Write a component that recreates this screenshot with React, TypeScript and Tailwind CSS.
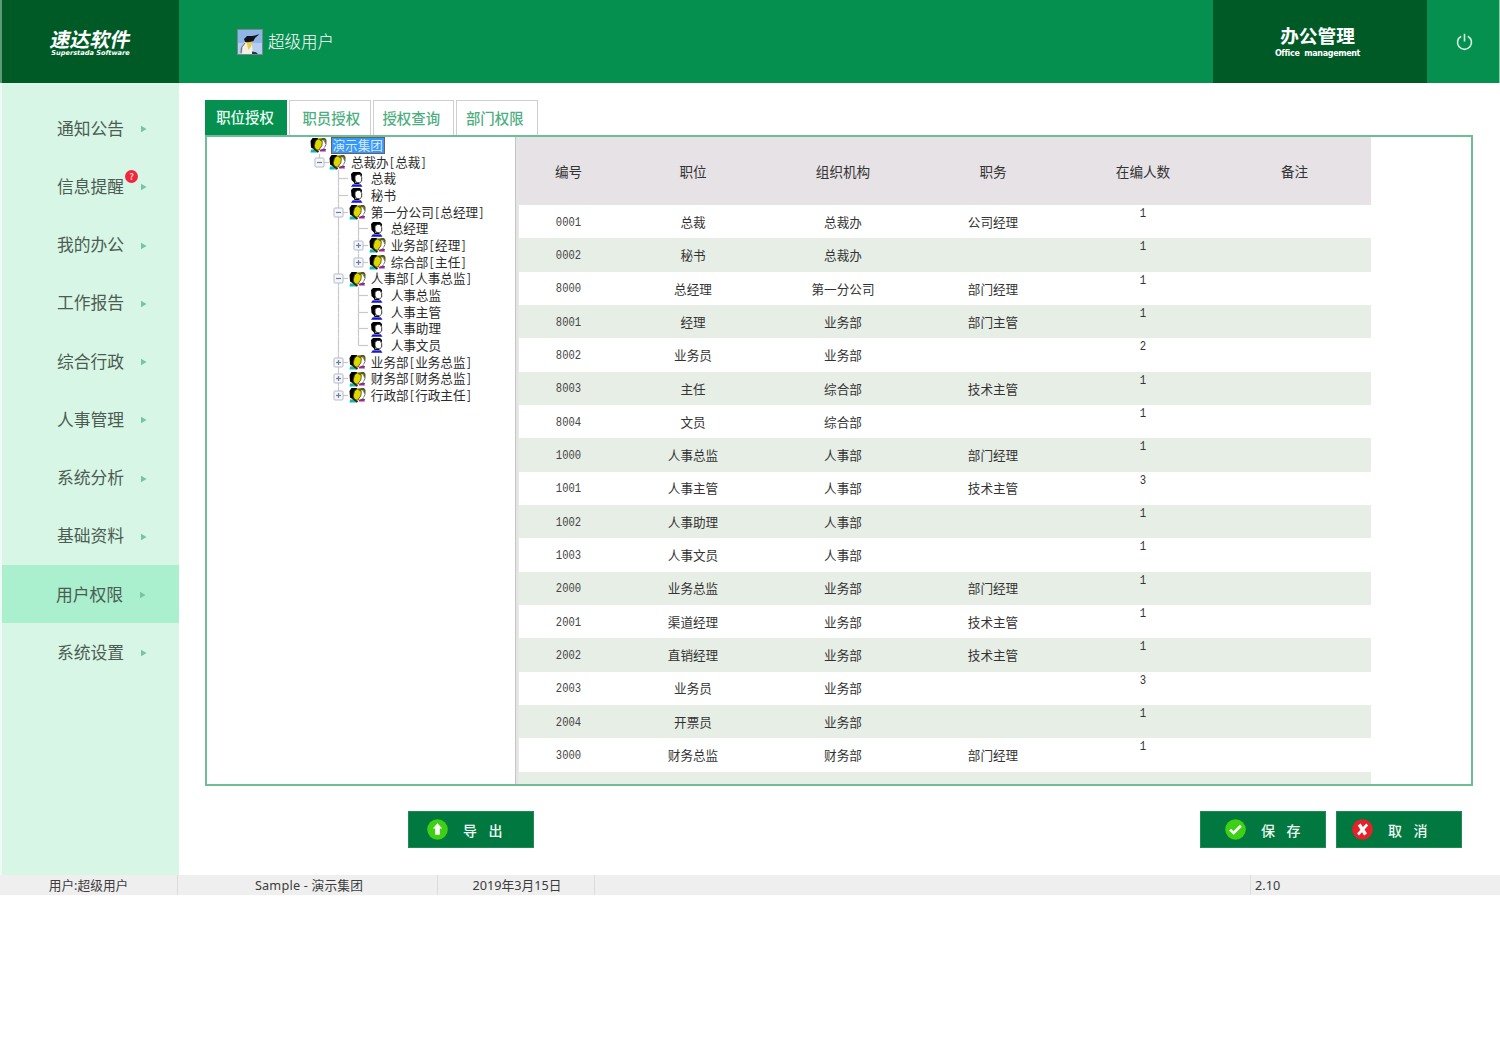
import React from "react";

const menu = ["通知公告", "信息提醒", "我的办公", "工作报告", "综合行政", "人事管理", "系统分析", "基础资料", "用户权限", "系统设置"];

const tabs = ["职员授权", "授权查询", "部门权限"];

type Node = { guides: string; label: string; person?: boolean; selected?: boolean };

// One guide character per indent cell:
// "." empty, "|" line, "t" branch, "l" last branch, "-" / "+" toggles, "m" toggle under the root, "p" last "+" toggle
const tree: Node[] = [
  { guides: "", label: "演示集团", selected: true },
  { guides: "m", label: "总裁办[总裁]" },
  { guides: ".t", label: "总裁", person: true },
  { guides: ".t", label: "秘书", person: true },
  { guides: ".-", label: "第一分公司[总经理]" },
  { guides: ".|t", label: "总经理", person: true },
  { guides: ".|+", label: "业务部[经理]" },
  { guides: ".|p", label: "综合部[主任]" },
  { guides: ".-", label: "人事部[人事总监]" },
  { guides: ".|t", label: "人事总监", person: true },
  { guides: ".|t", label: "人事主管", person: true },
  { guides: ".|t", label: "人事助理", person: true },
  { guides: ".|l", label: "人事文员", person: true },
  { guides: ".+", label: "业务部[业务总监]" },
  { guides: ".+", label: "财务部[财务总监]" },
  { guides: ".p", label: "行政部[行政主任]" },
];

const heads = ["编号", "职位", "组织机构", "职务", "在编人数", "备注"];

const rows = [
  ["0001", "总裁", "总裁办", "公司经理", "1"],
  ["0002", "秘书", "总裁办", "", "1"],
  ["8000", "总经理", "第一分公司", "部门经理", "1"],
  ["8001", "经理", "业务部", "部门主管", "1"],
  ["8002", "业务员", "业务部", "", "2"],
  ["8003", "主任", "综合部", "技术主管", "1"],
  ["8004", "文员", "综合部", "", "1"],
  ["1000", "人事总监", "人事部", "部门经理", "1"],
  ["1001", "人事主管", "人事部", "技术主管", "3"],
  ["1002", "人事助理", "人事部", "", "1"],
  ["1003", "人事文员", "人事部", "", "1"],
  ["2000", "业务总监", "业务部", "部门经理", "1"],
  ["2001", "渠道经理", "业务部", "技术主管", "1"],
  ["2002", "直销经理", "业务部", "技术主管", "1"],
  ["2003", "业务员", "业务部", "", "3"],
  ["2004", "开票员", "业务部", "", "1"],
  ["3000", "财务总监", "财务部", "部门经理", "1"],
];

const cols = "grid grid-cols-[99px_150px_150px_150px_150px_153px]";

function Guide({ kind }: { kind: string }) {
  const toggle = "m-+p".includes(kind);
  const up = kind !== ".";
  const down = kind !== "." && kind !== "l" && kind !== "p" && kind !== "m";
  const across = kind !== "." && kind !== "|";
  return (
    <svg width="19.9" height="16.67" viewBox="0 0 19.9 16.67" className="shrink-0" fill="none">
      <g stroke="#c9c9c9" strokeWidth="1.2">
        {up && <path d="M9.5 0V8.3" />}
        {down && <path d="M9.5 8.3V16.67" />}
        {across && <path d="M9.5 8.5H19" />}
      </g>
      {toggle && (
        <>
          <rect x="5" y="4" width="9" height="9" rx="1" fill="#f6f7fa" stroke="#b4bac5" />
          <path d="M7 8.5H12" stroke="#6f7ca2" strokeWidth="1.2" />
          {"+p".includes(kind) && <path d="M9.5 6V11" stroke="#6f7ca2" strokeWidth="1.2" />}
        </>
      )}
    </svg>
  );
}

function GroupIcon() {
  return (
    <svg width="17" height="16" viewBox="0 0 17 16" className="shrink-0">
      <path d="M10 2.5L12 1H15L16.5 3V7L15 6L12 3Z" fill="#5a5a20" />
      <path d="M11 3.5H14.5L15.5 7L14.5 10.5H11Z" fill="#fff" />
      <path d="M14.5 4L16 7.5L14.5 10.5" fill="none" stroke="#777" />
      <path d="M0.5 4L2.5 1H7.5L9 3L6.5 4.5L5 10.5L3.5 12L1 10.5Z" fill="#000" />
      <path d="M5.5 4L8 2H11L12.3 5L11.8 9L10 11L9.5 13H5.5L4.3 9Z" fill="#ddd800" stroke="#4c4a00" strokeWidth="0.8" />
      <path d="M8.5 2L11.5 1.5L12.5 4.5L10.5 4Z" fill="#6b6800" />
      <path d="M1 12.5H4L6 14.5H7.5V15.5H0.5Z" fill="#12b8a6" />
      <path d="M3.5 11L6 13.2L8.5 15" stroke="#222" strokeWidth="1.8" fill="none" />
      <path d="M10 13L12 12H14.5L16 14.5H10Z" fill="#a3209f" />
      <path d="M13.5 11.5L16 13" stroke="#333" />
    </svg>
  );
}

function PersonIcon() {
  return (
    <svg width="17" height="16" viewBox="0 0 17 16" className="shrink-0">
      <path d="M2 3L4 1H11L13 3V5L10 4L6.5 5V11L4.5 11L2.5 9Z" fill="#000" />
      <path d="M6 5L8.5 3.4H11.2L12.7 6.5V10L10.8 11.8H7.8L6 9Z" fill="#fff" stroke="#222" strokeWidth="0.9" />
      <path d="M4.8 9.5L6 12.5H10.3" stroke="#000" strokeWidth="1.3" fill="none" />
      <path d="M2 15.8L3.8 13.2L7 13.4H9.5L11.8 13.2L13.5 15.8Z" fill="#1616d8" />
    </svg>
  );
}

function TreeLabel({ text, selected }: { text: string; selected?: boolean }) {
  return (
    <span
      className={
        selected
          ? "ml-[4px] flex h-[16.5px] items-center border border-[#6a6258] bg-[#3797fa] px-px text-[#d9ecff]"
          : "ml-[4.5px] flex items-center text-[#2b2b2b]"
      }
    >
      {text.split(/([[\]])/).map((part, i) =>
        part === "[" || part === "]" ? (
          <span key={i} className={part === "[" ? "w-[6.6px] text-center" : "w-[6.6px] text-center"}>
            {part}
          </span>
        ) : (
          <span key={i}>{part}</span>
        ),
      )}
    </span>
  );
}

function Avatar() {
  return (
    <svg width="26" height="26" viewBox="0 0 26 26">
      <rect x="0.5" y="0.5" width="25" height="25" fill="#8fb4e6" stroke="#7d8590" />
      <path d="M1 14H25V25H1Z" fill="#b4cdf0" />
      <path d="M5 25L6 17L8 12L13 12L15 16L16 25Z" fill="#f3f1e6" />
      <path d="M7 10L10 7H15L18 6.5L22.5 5L18 9L16.5 12L12 14L8 13Z" fill="#101418" />
      <path d="M9.5 13.5L15.5 12.5L14.5 17L11.5 21Z" fill="#ecc94b" />
      <path d="M8 14L4.5 18.5L4 24" stroke="#6b6250" fill="none" />
      <path d="M15 22.5L19 23.2L21 25H15Z" fill="#2d3440" />
    </svg>
  );
}

function UpIcon() {
  return (
    <svg width="21" height="21" viewBox="0 0 21 21">
      <circle cx="10.5" cy="10.5" r="10.3" fill="#3fcf14" />
      <path d="M10.5 4.3L15.2 9.6H12.8V15.8H8.2V9.6H5.8Z" fill="#fff" />
    </svg>
  );
}

function CheckIcon() {
  return (
    <svg width="21" height="21" viewBox="0 0 21 21">
      <circle cx="10.5" cy="10.5" r="10.3" fill="#3fcf14" />
      <path d="M5 10.8L8.7 14L15.8 6.8" fill="none" stroke="#fff" strokeWidth="2.7" />
    </svg>
  );
}

function CrossIcon() {
  return (
    <svg width="21" height="21" viewBox="0 0 21 21">
      <circle cx="10.5" cy="10.5" r="10.3" fill="#e8202a" />
      <path d="M7.2 5.5L13.6 15.5" stroke="#fff" strokeWidth="3.4" />
      <path d="M15.2 5.5L6 15.5" stroke="#fff" strokeWidth="2.6" />
    </svg>
  );
}

function ActionButton({ icon, label, pad }: { icon: React.ReactNode; label: string; pad: string }) {
  return (
    <button className={`flex h-[37px] w-[126px] items-center border border-[#1f8a55] bg-[#007840] text-[14px] text-[#eefaf3] ${pad}`}>
      {icon}
      <span className="ml-[15px] flex gap-[11.5px] font-medium">
        {label.split("").map((c) => (
          <span key={c}>{c}</span>
        ))}
      </span>
    </button>
  );
}

export default function App() {
  return (
    <div className="h-[1054px] w-[1500px] overflow-hidden bg-white font-['Noto_Sans_CJK_SC',sans-serif] leading-none">
      <header className="flex h-[83px] bg-[#059050] text-white">
        <div className="flex w-[179px] flex-col items-center border-l-2 border-[#5f9a76] bg-[#005a26] pt-[28px]">
          <div className="-skew-x-12 text-[20px] leading-[22px] font-bold">速达软件</div>
          <div className="-mt-px font-['DejaVu_Sans',sans-serif] text-[6.6px] leading-[9px] font-bold whitespace-nowrap italic">
            Superstada Software
          </div>
        </div>
        <div className="flex flex-1 items-center pl-[58px]">
          <Avatar />
          <span className="ml-[5px] text-[16.5px] font-light">超级用户</span>
        </div>
        <div className="flex w-[214px] flex-col items-center bg-[#005a26] pt-[24px] pr-[5px]">
          <div className="text-[18.7px] leading-[22px] font-bold">办公管理</div>
          <div className="mt-[3px] font-['DejaVu_Sans',sans-serif] text-[8px] leading-[10px] font-bold tracking-[-0.35px] whitespace-pre">
            Office  management
          </div>
        </div>
        <div className="flex w-[73px] items-center justify-center border-r border-[#8fccae] pl-[2px]">
          <svg width="17" height="18" viewBox="0 0 17 18" fill="none" stroke="#d4efe0" strokeWidth="1.6">
            <path d="M5.2 3.2A7 7 0 1 0 11.8 3.2" />
            <path d="M8.5 0.8V8.5" />
          </svg>
        </div>
      </header>

      <div className="flex h-[792px]">
        <nav className="flex w-[179px] flex-col border-l-2 border-[#effaf4] bg-[#d8f6e6] pt-[16px]">
          {menu.map((m) => (
            <div
              key={m}
              className={
                m === "用户权限"
                  ? "flex h-[58.25px] items-center bg-[#aaefce] pl-[54px]"
                  : "flex h-[58.25px] items-center pl-[55px]"
              }
            >
              <span className="relative text-[16.8px] text-[#4c5c53]">
                {m}
                {m === "信息提醒" && (
                  <span className="absolute -top-[8px] left-[68px] flex size-[13px] items-center justify-center rounded-full bg-[#f0263c] text-[9px] font-bold text-[#ffc9cf]">
                    ?
                  </span>
                )}
              </span>
              <svg width="6" height="8" viewBox="0 0 6 8" className="mt-[2px] ml-[17px]">
                <path d="M0 0.8L5.6 4L0 7.2Z" fill="#74c5a0" />
              </svg>
            </div>
          ))}
        </nav>

        <main className="flex-1 pt-[17px] pl-[26px]">
          <div className="flex h-[35px] text-[14.4px] font-medium">
            <div className="flex w-[82px] items-center justify-center bg-[#059050] pr-[2px] text-[#e9fff3]">职位授权</div>
            {tabs.map((t, i) => (
              <div
                key={t}
                className={
                  i === 0
                    ? "ml-[2px] flex w-[81.5px] items-center justify-center border border-b-0 border-[#cfcfcf] pl-[3px] text-[#4dae80]"
                    : "ml-[2px] flex w-[81.5px] items-center justify-center border border-b-0 border-[#cfcfcf] pr-[4px] text-[#4dae80]"
                }
              >
                {t}
              </div>
            ))}
          </div>

          <div className="flex h-[651px] w-[1268px] overflow-hidden border-2 border-[#6fbd97]">
            <div className="w-[308px] pl-[102.5px] text-[12.6px]">
              {tree.map((n, i) => (
                <div key={i} className="flex h-[16.67px] items-center whitespace-nowrap">
                  {n.guides.split("").map((g, j) => (
                    <Guide key={j} kind={g} />
                  ))}
                  {n.person ? <PersonIcon /> : <GroupIcon />}
                  <TreeLabel text={n.label} selected={n.selected} />
                </div>
              ))}
            </div>
            <div className="w-[4px] border-r border-l border-r-[#e8e8e8] border-l-[#c6c6c6] bg-[#e4e4e4]" />
            <div className="w-[852px] text-[12.6px] text-[#333]">
              <div className={`${cols} h-[68px] items-center bg-[#e7e2e6] pt-px text-center text-[13.6px]`}>
                {heads.map((h) => (
                  <div key={h}>{h}</div>
                ))}
              </div>
              {rows.map((r, i) => (
                <div
                  key={r[0]}
                  className={`${cols} h-[33.33px] items-center text-center ${i % 2 ? "bg-[#e7eee6]" : "bg-white"}`}
                >
                  <div className="scale-x-[0.81] pt-px font-['Liberation_Mono',monospace] text-[13px] text-[#444]">{r[0]}</div>
                  <div className="pt-px">{r[1]}</div>
                  <div className="pt-px">{r[2]}</div>
                  <div className="pt-px">{r[3]}</div>
                  <div className="scale-x-[0.85] self-start pt-[3px] font-['Liberation_Mono',monospace] text-[12.5px]">{r[4]}</div>
                  <div />
                </div>
              ))}
              <div className="h-[14px] bg-[#e7eee6]" />
            </div>
          </div>

          <div className="mt-[25px] flex w-[1268px] pl-[203px]">
            <ActionButton icon={<UpIcon />} label="导出" pad="pl-[18px]" />
            <div className="ml-auto flex gap-[10px] pr-[11px]">
              <ActionButton icon={<CheckIcon />} label="保存" pad="pl-[24px]" />
              <ActionButton icon={<CrossIcon />} label="取消" pad="pl-[15px]" />
            </div>
          </div>
        </main>
      </div>

      <footer className="flex h-[20px] items-center bg-[#efefef] font-['Noto_Sans','Noto_Sans_CJK_SC',sans-serif] text-[12.7px] text-[#3c3c3c]">
        <div className="flex h-full w-[178px] items-center justify-center border-r border-[#dcdcdc] pt-px">用户:超级用户</div>
        <div className="flex h-full w-[260px] items-center justify-center border-r border-[#dcdcdc] pt-px pl-[3px] tracking-[0.2px]">Sample - 演示集团</div>
        <div className="flex h-full w-[157px] items-center justify-center border-r border-[#dcdcdc] pt-px pl-[2px]">2019年3月15日</div>
        <div className="h-full w-[656px] border-r border-[#dcdcdc]" />
        <div className="pt-px pl-[4px]">2.10</div>
      </footer>
    </div>
  );
}
